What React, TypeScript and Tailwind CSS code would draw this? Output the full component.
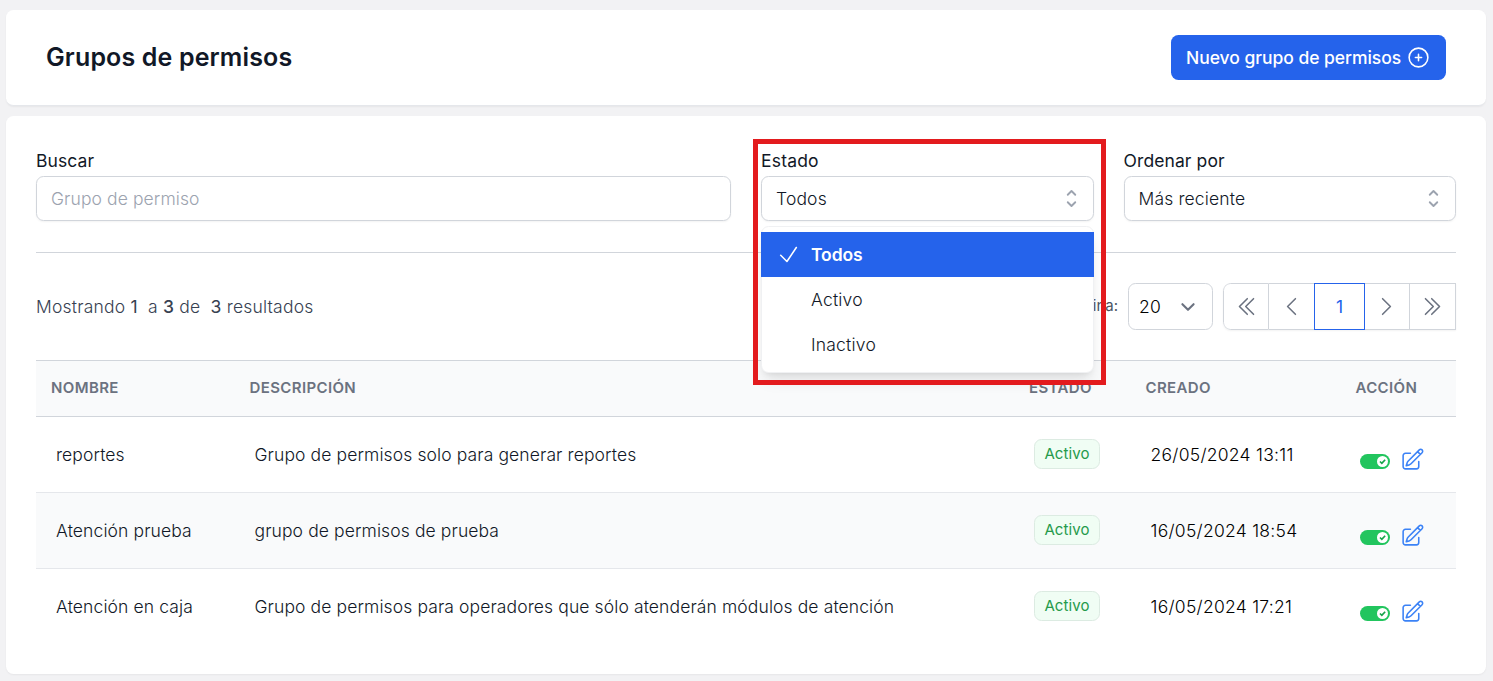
import React from "react";

type IconProps = { d: string; className?: string; box?: number; strokeWidth?: number };

function Icon({ d, className = "size-[25px]", box = 24, strokeWidth = 1.5 }: IconProps) {
  return (
    <svg
      viewBox={`0 0 ${box} ${box}`}
      fill="none"
      stroke="currentColor"
      strokeWidth={strokeWidth}
      strokeLinecap="round"
      strokeLinejoin="round"
      className={`shrink-0 ${className}`}
    >
      <path d={d} />
    </svg>
  );
}

const icons = {
  plusCircle: "M12 9v6m3-3H9m12 0a9 9 0 1 1-18 0 9 9 0 0 1 18 0Z",
  check: "m4.5 12.75 6 6 9-13.5",
  upDown: "M7 7l3-3 3 3m0 6l-3 3-3-3",
  down: "M6 8l4 4 4-4",
  first: "m18.75 4.5-7.5 7.5 7.5 7.5m-6-15L5.25 12l7.5 7.5",
  prev: "M15.75 19.5 8.25 12l7.5-7.5",
  next: "m8.25 4.5 7.5 7.5-7.5 7.5",
  last: "m5.25 4.5 7.5 7.5-7.5 7.5m6-15 7.5 7.5-7.5 7.5",
  edit: "m16.862 4.487 1.687-1.688a1.875 1.875 0 1 1 2.652 2.652L10.582 16.07a4.5 4.5 0 0 1-1.897 1.13L6 18l.8-2.685a4.5 4.5 0 0 1 1.13-1.897l8.932-8.931Zm0 0L19.5 7.125M18 14v4.75A2.25 2.25 0 0 1 15.75 21H5.25A2.25 2.25 0 0 1 3 18.75V8.25A2.25 2.25 0 0 1 5.25 6H10",
};

const rows = [
  { name: "reportes", description: "Grupo de permisos solo para generar reportes", created: "26/05/2024 13:11" },
  { name: "Atención prueba", description: "grupo de permisos de prueba", created: "16/05/2024 18:54" },
  {
    name: "Atención en caja",
    description: "Grupo de permisos para operadores que sólo atenderán módulos de atención",
    created: "16/05/2024 17:21",
  },
];

const columns = "grid grid-cols-[198.5px_779.5px_116.5px_210px_1fr]";

function SelectBox({ value }: { value: string }) {
  return (
    <button className="flex h-[45px] w-full items-center justify-between rounded-[7.5px] border border-[#d1d5db] bg-white pr-[9px] pl-[14px] font-light tracking-[0.15px] shadow-xs">
      <span className="pt-[2px]">{value}</span>
      <Icon d={icons.upDown} box={20} className="size-[25px] text-[#9ca3af]" />
    </button>
  );
}

function StatusDropdown() {
  return (
    <div className="relative">
      <label className="block h-[30px] leading-[30px] tracking-[0.2px]">Estado</label>
      <SelectBox value="Todos" />
      <ul className="absolute top-[80px] left-0 z-10 w-full rounded-[7.5px] border border-[#f0f1f3] bg-white pt-[5px] shadow-lg">
        <li className="-mx-px flex h-[45px] items-center bg-[#2563eb] pl-[14.5px] font-semibold text-white">
          <Icon d={icons.check} />
          <span className="pt-[2px] pl-[10.5px] tracking-[-0.1px]">Todos</span>
        </li>
        <li className="flex h-[45px] items-center pt-[2px] pl-[49px] font-light tracking-[0.2px]">Activo</li>
        <li className="mb-[5px] flex h-[45px] items-center pt-[2px] pl-[49px] font-light tracking-[0.2px]">
          Inactivo
        </li>
      </ul>
      <div className="pointer-events-none absolute -top-[7px] -left-[8px] z-20 h-[246px] w-[353px] border-5 border-[#e31b1e]" />
    </div>
  );
}

function Pagination() {
  return (
    <nav className="flex h-[47px] overflow-hidden rounded-l-[7.5px] text-[#6b7280] shadow-xs">
      <button className="flex w-[46px] items-center justify-center rounded-l-[7.5px] border border-[#d1d5db]">
        <Icon d={icons.first} />
      </button>
      <button className="flex w-[45px] items-center justify-center border-y border-[#d1d5db]">
        <Icon d={icons.prev} />
      </button>
      <button className="flex w-[51px] items-center justify-center border border-[#2563eb] pt-[2px] text-[#2563eb]">
        1
      </button>
      <button className="flex w-[45px] items-center justify-center border-y border-r border-[#d1d5db] pr-px">
        <Icon d={icons.next} />
      </button>
      <button className="flex w-[46px] items-center justify-center border-y border-r border-[#d1d5db]">
        <Icon d={icons.last} />
      </button>
    </nav>
  );
}

function Toggle() {
  return (
    <span className="flex h-[15px] w-[30px] items-center justify-end rounded-full bg-[#22c55e] pr-[2.5px]">
      <svg viewBox="0 0 10 10" className="size-[11px]">
        <circle cx="5" cy="5" r="5" fill="white" />
        <path d="M2.7 5 4.4 6.7 7.4 3.4" fill="none" stroke="#16a34a" strokeWidth="1.5" />
      </svg>
    </span>
  );
}

export default function App() {
  return (
    <div className="flex h-[681px] w-[1493px] flex-col gap-[10px] bg-[#f2f2f4] pt-[10px] pr-[7px] pb-[7px] pl-[6px] font-['Inter',sans-serif] text-[17.5px] text-[#111827]">
      <header className="flex h-[96px] items-center justify-between rounded-[7.5px] border-b border-[#e5e7eb] bg-white px-10 shadow-xs">
        <h1 className="text-[25px] font-semibold tracking-[0.14px]">Grupos de permisos</h1>
        <button className="flex h-[45px] w-[275px] items-center gap-[5px] rounded-[7.5px] bg-[#2563eb] pl-[15px] font-medium tracking-[-0.04px] whitespace-nowrap text-white">
          <span className="pt-[2px]">Nuevo grupo de permisos</span>
          <Icon d={icons.plusCircle} />
        </button>
      </header>

      <main className="flex flex-1 flex-col rounded-[7.5px] bg-white px-[30px] pt-[30px] shadow-xs">
        <section className="grid h-[107px] shrink-0 grid-cols-4 gap-[30px] border-b border-[#d1d5db]">
          <div className="col-span-2">
            <label className="block h-[30px] leading-[30px] tracking-[0.1px]">Buscar</label>
            <input
              placeholder="Grupo de permiso"
              className="h-[45px] w-full rounded-[7.5px] border border-[#d1d5db] px-[14px] font-light tracking-[0.1px] shadow-xs placeholder:text-[#9ca3af]"
            />
          </div>
          <StatusDropdown />
          <div>
            <label className="block h-[30px] leading-[30px] tracking-[0.1px]">Ordenar por</label>
            <SelectBox value="Más reciente" />
          </div>
        </section>

        <section className="flex h-[107px] shrink-0 items-center justify-between">
          <p className="pt-[2px] font-light tracking-[0.2px] whitespace-pre text-[#374151]">
            Mostrando <span className="font-normal">1</span>
            {"  a "}
            <span className="font-medium">3</span>
            {" de  "}
            <span className="font-normal">3</span> resultados
          </p>
          <div className="flex items-center">
            <span className="pr-[10px] text-[15px] text-[#4b5563]">Registros por página:</span>
            <button className="mr-[10px] flex h-[47px] w-[85px] items-center justify-between rounded-[7.5px] border border-[#d1d5db] pr-[10px] pl-[10px] font-light tracking-[0.3px] text-black">
              <span className="pt-[2px]">20</span>
              <Icon d={icons.down} box={20} className="size-[28px] text-[#6b7280]" />
            </button>
            <Pagination />
          </div>
        </section>

        <section>
          <div
            className={`${columns} h-[57px] items-center border-y border-[#d1d5db] bg-[#f9fafb] text-[15px] font-semibold tracking-[0.375px] text-[#6b7280]`}
          >
            <span className="pl-[15px]">NOMBRE</span>
            <span className="pl-[15px]">DESCRIPCIÓN</span>
            <span className="pl-[15px]">ESTADO</span>
            <span className="pl-[15px]">CREADO</span>
            <span className="pl-[15px]">ACCIÓN</span>
          </div>
          {rows.map((row) => (
            <div
              key={row.name}
              className={`${columns} h-[76px] items-center border-b border-[#e5e7eb] font-light tracking-[0.11px] last:border-transparent even:bg-white odd:bg-[#f9fafb]`}
            >
              <span className="pt-[2px] pl-[20px]">{row.name}</span>
              <span className="pt-[2px] pl-[20px]">{row.description}</span>
              <span className="-mt-px pl-[20px]">
                <span className="flex h-[30px] w-[66px] items-center justify-center rounded-[7.5px] border border-[#dcebe2] bg-[#f0fdf4] text-[15px] font-normal text-[#259a4b]">
                  Activo
                </span>
              </span>
              <span className="pt-[2px] pl-[20px] tracking-[0.27px] text-black">{row.created}</span>
              <span className="flex items-center gap-[10px] pt-[13px] pl-[19.5px]">
                <Toggle />
                <Icon d={icons.edit} className="-mt-[3px] size-[25px] text-[#3b82f6]" />
              </span>
            </div>
          ))}
        </section>
      </main>
    </div>
  );
}
